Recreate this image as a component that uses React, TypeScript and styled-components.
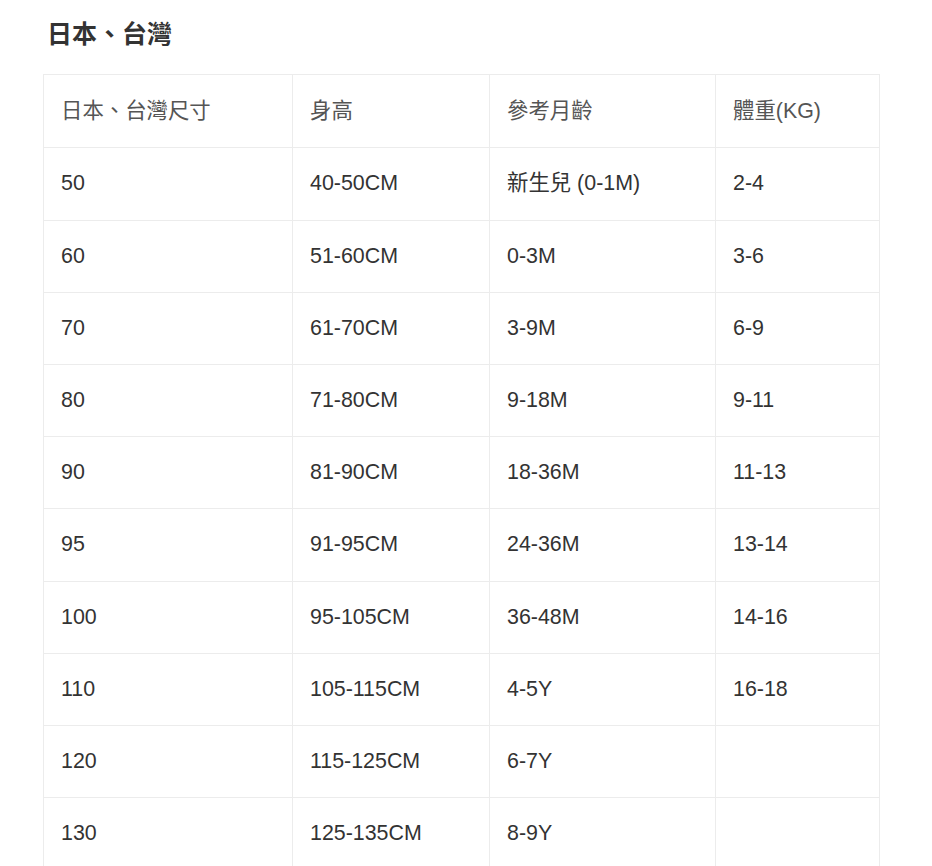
import React from "react";
import styled, { createGlobalStyle } from "styled-components";

const Global = createGlobalStyle`
  html, body { margin: 0; padding: 0; background: #fff; }
  body { font-family: "Liberation Sans", Arial, "Noto Sans CJK TC", sans-serif; color: #333; }
`;

const Page = styled.div`
  padding: 19px 52px 40px 43px;
`;

const Title = styled.h3`
  margin: 0 0 24px 4px;
  font-size: 25px;
  line-height: 31px;
  font-weight: 700;
  color: #333;
`;

const Table = styled.table`
  border-collapse: collapse;
  table-layout: fixed;
  width: 836px;
  font-size: 21.4px;
`;

const Th = styled.th<{ $w: number }>`
  width: ${(p) => p.$w}px;
  text-align: left;
  font-weight: 400;
  color: #555;
  border: 1px solid #ececec;
  padding: 20.5px 17px 20.5px 17px;
  line-height: 31.33px;
  height: 31.33px;
`;

const Td = styled.td`
  border: 1px solid #ececec;
  padding: 20px 17px;
  line-height: 31.2px;
  height: 31.2px;
  color: #333;
`;

const headers: [string, number][] = [
  ["日本、台灣尺寸", 214],
  ["身高", 162],
  ["參考月齡", 191],
  ["體重(KG)", 129],
];

const rows = [
  ["50", "40-50CM", "新生兒 (0-1M)", "2-4"],
  ["60", "51-60CM", "0-3M", "3-6"],
  ["70", "61-70CM", "3-9M", "6-9"],
  ["80", "71-80CM", "9-18M", "9-11"],
  ["90", "81-90CM", "18-36M", "11-13"],
  ["95", "91-95CM", "24-36M", "13-14"],
  ["100", "95-105CM", "36-48M", "14-16"],
  ["110", "105-115CM", "4-5Y", "16-18"],
  ["120", "115-125CM", "6-7Y", ""],
  ["130", "125-135CM", "8-9Y", ""],
];

export default function App() {
  return (
    <Page>
      <Global />
      <Title>日本、台灣</Title>
      <Table>
        <thead>
          <tr>
            {headers.map(([h, w]) => (
              <Th key={h} $w={w}>{h}</Th>
            ))}
          </tr>
        </thead>
        <tbody>
          {rows.map((r) => (
            <tr key={r[0]}>
              {r.map((c, i) => (
                <Td key={i}>{c}</Td>
              ))}
            </tr>
          ))}
        </tbody>
      </Table>
    </Page>
  );
}
